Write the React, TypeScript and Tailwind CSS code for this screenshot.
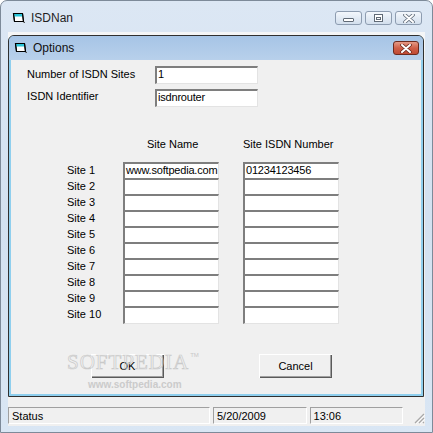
import React from "react";

const font = { fontFamily: '"Liberation Sans", Arial, sans-serif' };

function AppIcon() {
  return (
    <svg width="14" height="12" viewBox="0 0 14 12" className="shrink-0">
      <path d="M1.5 1.5 H10.5 L11.5 9.5 H2.5 Z" fill="#ffffff" stroke="#000" strokeWidth="1" />
      <path d="M2 2 H10 L10.4 4.5 H2.3 Z" fill="#29c4d8" />
      <path d="M1.5 1.5 H10.5 L11.5 9.5 H2.5 Z" fill="none" stroke="#000" strokeWidth="1.2" />
      <path d="M11.5 10.5 L13 10.5" stroke="#555" strokeWidth="1" />
    </svg>
  );
}

function XGlyph({ dark }: { dark: string }) {
  return (
    <svg width="12" height="9" viewBox="0 0 12 9">
      <path d="M2 1 L10 8 M10 1 L2 8" stroke={dark} strokeWidth="3.6" strokeLinecap="round" />
      <path d="M2 1 L10 8 M10 1 L2 8" stroke="#ffffff" strokeWidth="2" strokeLinecap="round" />
    </svg>
  );
}

function CaptionButton({ children }: { children: React.ReactNode }) {
  return (
    <div className="w-[27px] h-[14px] rounded-[3px] border border-[#8d9cb0] bg-gradient-to-b from-[#f3f7fc] to-[#d3dfed] flex items-center justify-center">
      {children}
    </div>
  );
}

function Box({ value, w, h = 18, last = true }: { value?: string; w: number; h?: number; last?: boolean }) {
  return (
    <div
      className={`bg-white border-t-2 border-l-2 border-r border-t-[#7e7e7e] border-l-[#7e7e7e] border-r-[#e3e3e3] border-b-[#e3e3e3] text-[11px] leading-[13px] text-black pl-[1px] tracking-[-0.2px] ${last ? "border-b" : ""}`}
      style={{ width: w, height: h }}
    >
      {value}
    </div>
  );
}

function Panel({ text, w }: { text: string; w: number }) {
  return (
    <div
      className="h-[17px] border-t border-l border-r border-b border-t-[#a0a0a0] border-l-[#a0a0a0] border-r-white border-b-white text-[11px] leading-[14px] text-black pl-[3px] pt-[1px]"
      style={{ width: w }}
    >
      {text}
    </div>
  );
}

function WinButton({ label }: { label: string }) {
  return (
    <div className="w-[73px] h-[24px] bg-[#f0f0f0] shadow-[inset_1px_1px_#ffffff,inset_-1px_-1px_#5a5a5a,inset_-2px_-2px_#a0a0a0] flex items-center justify-center text-[11px] text-black">
      {label}
    </div>
  );
}

const sites = Array.from({ length: 10 }, (_, i) => i + 1);

export default function App() {
  return (
    <div className="w-[433px] h-[433px] overflow-hidden bg-white" style={font}>
      <div className="relative w-[433px] h-[433px] border border-[#7d8a99] rounded-t-[7px] bg-gradient-to-b from-[#dce7f4] via-[#d3e1f0] to-[#d9e6f4] flex flex-col">
        {/* Title bar */}
        <div className="h-[31px] flex items-start pl-[11px] pr-[10px] pt-[10px] shrink-0">
          <div className="flex items-center gap-[5px] pt-[1px]">
            <AppIcon />
            <span className="text-[12px] leading-[12px] text-[#1f1f1f]">ISDNan</span>
          </div>
          <div className="ml-auto flex gap-[3px]">
            <CaptionButton>
              <div className="w-[11px] h-[4px] mt-[4px] rounded-[1px] border border-[#606a76] bg-white" />
            </CaptionButton>
            <CaptionButton>
              <div className="w-[9px] h-[8px] border border-[#606a76] bg-white flex items-center justify-center">
                <div className="w-[5px] h-[3px] border border-[#606a76]" />
              </div>
            </CaptionButton>
            <CaptionButton>
              <XGlyph dark="#5f6a78" />
            </CaptionButton>
          </div>
        </div>

        {/* Window body */}
        <div className="flex-1 flex flex-col px-[7px] pb-[6px]">
          <div className="h-[19px] bg-[#f5f6f7] flex items-start gap-[14px] pl-[8px] pt-[1px] text-[11px] text-[#333]">
            <span>File</span>
            <span>View</span>
            <span>Help</span>
          </div>
          <div className="flex-1 bg-[#f0f0f0]" />
          <div className="h-[23px] bg-[#f0f0f0] flex items-start gap-[3px] pt-[4px]">
            <Panel text="Status" w={203} />
            <Panel text="5/20/2009" w={94} />
            <Panel text="13:06" w={94} />
            <svg width="12" height="12" viewBox="0 0 12 12" className="ml-[7px] mt-[5px]">
              <path d="M11 2 L2 11 M11 6 L6 11 M11 10 L10 11" stroke="#a8a8a8" strokeWidth="1.2" />
              <path d="M12 3 L3 12 M12 7 L7 12" stroke="#ffffff" strokeWidth="0.8" />
            </svg>
          </div>
        </div>

        {/* Options dialog */}
        <div className="absolute left-[7px] top-[34px] w-[416px] h-[362px] border border-[#303030] rounded-t-[6px] bg-[#8fcfee] flex flex-col">
          <div className="h-[24px] shrink-0 rounded-t-[5px] bg-gradient-to-b from-[#a6c4e6] to-[#b8d0eb] flex items-center pl-[5px] pr-[4px]">
            <AppIcon />
            <span className="ml-[5px] text-[12px] text-[#111]">Options</span>
            <div className="ml-auto w-[26px] h-[14px] rounded-[3px] border border-[#6c2a1e] bg-gradient-to-b from-[#e49a87] via-[#cf5f48] to-[#c04a33] flex items-center justify-center">
              <XGlyph dark="#6b2a20" />
            </div>
          </div>
          <div className="flex-1 mx-[2px] mb-[2px] bg-[#f0f0f0] relative text-[11px] text-black">
            <div className="flex flex-col pt-[6px]">
              <div className="flex items-start">
                <span className="ml-[16px] w-[128px] pt-[2px] leading-[13px]">Number of ISDN Sites</span>
                <Box value="1" w={103} />
              </div>
              <div className="flex items-start mt-[5px]">
                <span className="ml-[16px] w-[128px] pt-[1px] leading-[13px]">ISDN Identifier</span>
                <Box value="isdnrouter" w={103} />
              </div>

              <div className="flex mt-[31px] leading-[13px]">
                <span className="ml-[136px] w-[96px]">Site Name</span>
                <span>Site ISDN Number</span>
              </div>

              <div className="flex flex-col mt-[11px] ml-[56px]">
                {sites.map((n) => {
                  const last = n === 10;
                  return (
                    <div key={n} className="flex items-start">
                      <span className="w-[56px] pt-[2px] leading-[13px]">Site {n}</span>
                      <Box value={n === 1 ? "www.softpedia.com" : ""} w={96} h={last ? 18 : 16} last={last} />
                      <div className="w-[24px]" />
                      <Box value={n === 1 ? "01234123456" : ""} w={96} h={last ? 18 : 16} last={last} />
                    </div>
                  );
                })}
              </div>

              <div className="flex mt-[30px] ml-[80px] gap-[95px]">
                <WinButton label="OK" />
                <WinButton label="Cancel" />
              </div>
            </div>

            {/* watermark */}
            <div className="absolute left-[56px] top-[292px] pointer-events-none flex flex-col items-start">
              <div className="flex items-start">
                <span
                  className="text-[21px] leading-[21px] text-transparent tracking-[1px]"
                  style={{ fontFamily: '"Liberation Serif", serif', WebkitTextStroke: "0.7px #c9c9c9" }}
                >
                  SOFTPEDIA
                </span>
                <span className="text-[6px] leading-[6px] text-[#c8c8c8] ml-[1px]">TM</span>
              </div>
              <span
                className="ml-[21px] mt-[6px] text-[10px] leading-[11px] text-[#cbcbcb] font-bold"
                style={{ fontFamily: '"Liberation Sans Narrow", "Liberation Sans", sans-serif' }}
              >
                www.softpedia.com
              </span>
            </div>
          </div>
        </div>
      </div>
    </div>
  );
}
